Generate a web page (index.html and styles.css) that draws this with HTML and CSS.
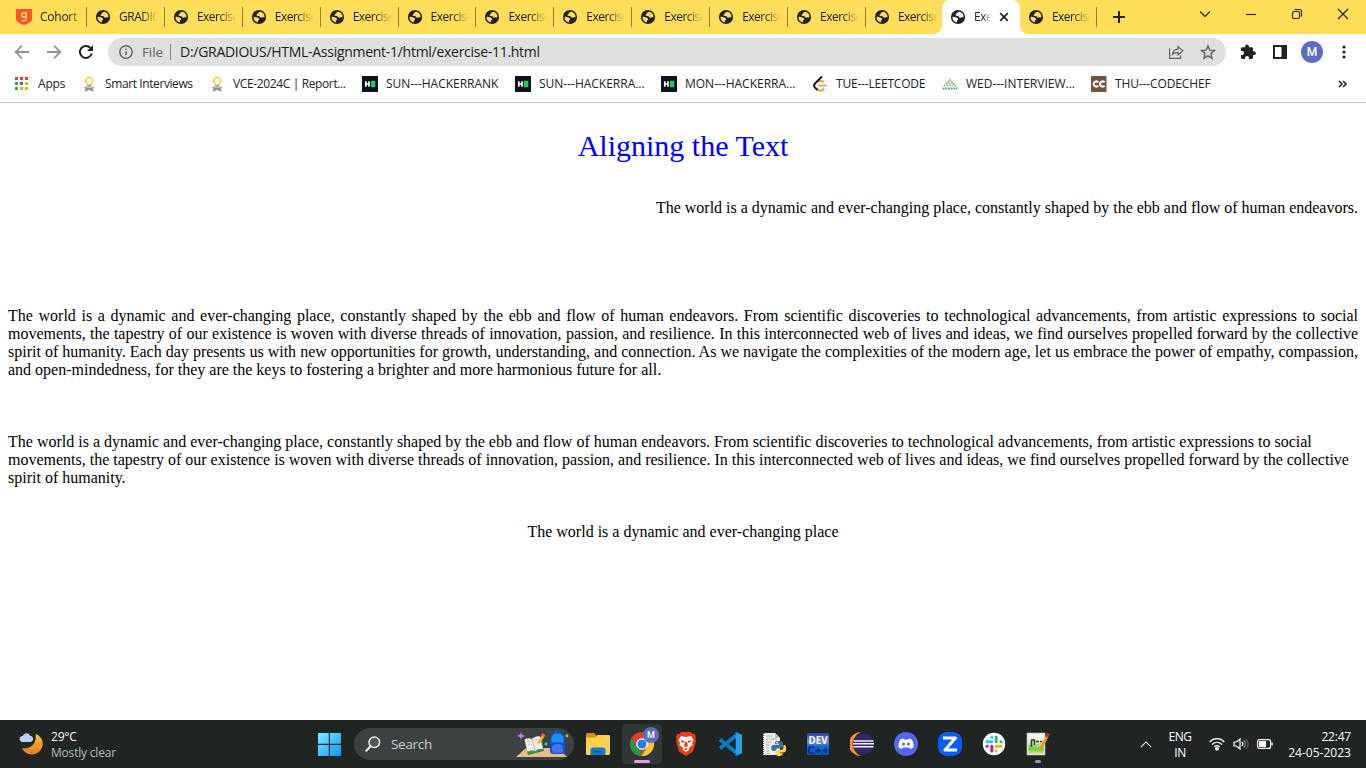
FILE: index.html
```html
<!DOCTYPE html>
<html lang="en">
<head>
<meta charset="utf-8">
<title>Aligning the Text</title>
<link rel="stylesheet" href="styles.css">
</head>
<body>
<svg class="defs" width="0" height="0">
  <symbol id="globe" viewBox="0 0 16 16">
    <path fill="#202124" fill-rule="evenodd" d="M8 .9a7.100 7.100 0 1 0 0 14.200A7.100 7.100 0 0 0 8 .9zM9.500 2.800C8 3 6.800 3.700 6.700 4.600c0 .7-1 .8-1.100 1.500-.1.700.6 1 1.300.9 1-.1 1.600-.1 2 .7.400.9 1.400 1.200 2.200.8.700-.4 1.500-.2 2.400-.1A5.500 5.500 0 0 0 9.500 2.800zM2.500 7.800c1.200.5 2.700.2 4 .7 1.200.5 1.900 1.300 1.600 2.100-.3.700-1.100.7-1.200 1.400v1.400A5.600 5.600 0 0 1 2.500 7.800z"/>
  </symbol>
  <symbol id="bulb" viewBox="0 0 16 16">
    <path fill="#fffbe0" stroke="#f0cf3c" stroke-width="1.500" d="M6.500 9C6 7.800 4.700 6.800 4.700 4.700a3.400 3.400 0 0 1 6.800 0C11.500 6.800 10.100 7.800 9.700 9z"/>
    <path fill="#8d8d8d" d="M6 9.300h4.200v1.500H6zM3.500 10.500l2.500 1h4.200l2.500-1v1.700L11 13l1.700 1v1.200h-2L8 13.500l-2.600 1.700H3.500V14l1.800-1-1.800-.8z"/>
  </symbol>
  <symbol id="hr" viewBox="0 0 16 16">
    <path fill="#0e141e" d="M0 0h16v16H0z"/><path stroke="#fff" stroke-width="1.700" d="M3.800 5.300v5.400M7 5.300v5.400M3.800 8H7"/><path fill="#1bd15f" d="M9 4.800h4.300v6.400H9z"/>
  </symbol>
</svg>

<header class="browser">
  <div class="tabstrip">
    <div class="tabs">
      <div class="tab"><svg class="ico" viewBox="0 0 16 16"><path fill="#fa5330" d="M0 0h16v10c0 3-4 4.600-8 6-4-1.400-8-3-8-6z"/><circle cx="8" cy="6" r="2.200" fill="none" stroke="#ffde59" stroke-width="1.500"/><path fill="none" stroke="#ffde59" stroke-width="1.400" d="M10.300 3v6.500c0 2.500-3.200 2.800-4.700 1.500"/></svg><span>Cohort</span></div>
      <div class="tab"><svg class="ico"><use href="#globe"/></svg><span>GRADIO</span></div>
      <div class="tab"><svg class="ico"><use href="#globe"/></svg><span>Exercise</span></div>
      <div class="tab"><svg class="ico"><use href="#globe"/></svg><span>Exercise</span></div>
      <div class="tab"><svg class="ico"><use href="#globe"/></svg><span>Exercise</span></div>
      <div class="tab"><svg class="ico"><use href="#globe"/></svg><span>Exercise</span></div>
      <div class="tab"><svg class="ico"><use href="#globe"/></svg><span>Exercise</span></div>
      <div class="tab"><svg class="ico"><use href="#globe"/></svg><span>Exercise</span></div>
      <div class="tab"><svg class="ico"><use href="#globe"/></svg><span>Exercise</span></div>
      <div class="tab"><svg class="ico"><use href="#globe"/></svg><span>Exercise</span></div>
      <div class="tab"><svg class="ico"><use href="#globe"/></svg><span>Exercise</span></div>
      <div class="tab last"><svg class="ico"><use href="#globe"/></svg><span>Exercise</span></div>
      <div class="tab active"><svg class="ico"><use href="#globe"/></svg><span>Exe</span><svg class="close" viewBox="0 0 10 10"><path stroke="#202124" stroke-width="1.700" d="M1.200 1.200l7.600 7.600M8.800 1.200L1.200 8.800"/></svg></div>
      <div class="tab after"><svg class="ico"><use href="#globe"/></svg><span>Exercise</span></div>
    </div>
    <svg class="plus" viewBox="0 0 12 12"><path stroke="#202124" stroke-width="2" d="M6 0v12M0 6h12"/></svg>
    <div class="winctl">
      <svg viewBox="0 0 12 12"><path d="M1 3.500l5 5 5-5"/></svg>
      <svg viewBox="0 0 12 12"><path d="M1 6.500h10"/></svg>
      <svg viewBox="0 0 12 12"><rect x="1.500" y="3.500" width="7" height="7" rx="1.500"/><path d="M3.500 1.500H8.500a2 2 0 0 1 2 2V8.500"/></svg>
      <svg viewBox="0 0 12 12"><path d="M1 1l10 10M11 1L1 11"/></svg>
    </div>
  </div>

  <div class="toolbar">
    <div class="nav">
      <svg viewBox="0 0 16 16"><path class="dim" d="M15 8H2M8 1.700L1.700 8 8 14.300"/></svg>
      <svg viewBox="0 0 16 16"><path class="dim" d="M1 8h13M8 1.700L14.300 8 8 14.300"/></svg>
      <svg viewBox="0 0 16 16"><path fill="none" stroke="#202124" stroke-width="2" d="M13.700 9.500A6 6 0 1 1 12.300 3.800"/><path fill="#202124" d="M15 1v6H9z"/></svg>
    </div>
    <div class="omnibox">
      <svg class="info" viewBox="0 0 14 14"><circle cx="7" cy="7" r="6.200" fill="none" stroke="#5f6368" stroke-width="1.400"/><path stroke="#5f6368" stroke-width="1.500" d="M7 6.200v4M7 3.600v1.500"/></svg>
      <span class="file">File</span><i></i><span class="url">D:/GRADIOUS/HTML-Assignment-1/html/exercise-11.html</span>
      <svg class="share" viewBox="0 0 16 16"><path fill="none" stroke="#5f6368" stroke-width="1.200" d="M1.600 4.500v9.900h11V11.500M4.500 10.300c.4-3 2.200-5 5.500-5.200V2.500l4.800 4.200-4.800 4.200V8.300c-2.600 0-4.200.6-5.500 2z"/></svg>
      <svg class="star" viewBox="0 0 16 16"><path fill="none" stroke="#5f6368" stroke-width="1.400" d="M8 1.900l1.800 4.300 4.600.4-3.500 3 1.100 4.600L8 11.800l-4 2.400 1.100-4.600-3.500-3 4.600-.4z"/></svg>
    </div>
    <div class="actions">
      <svg viewBox="0 0 16 16"><path fill="#202124" d="M14 7.300h-1V4.600c0-.8-.6-1.400-1.400-1.400H8.900V2.500a1.900 1.900 0 0 0-3.800 0v.7H2.400C1.600 3.200 1 3.800 1 4.600v2.500h1a2 2 0 0 1 0 4H1v2.500c0 .8.600 1.400 1.400 1.400H5v-1a2 2 0 0 1 4 0v1h2.600c.8 0 1.400-.6 1.400-1.400V11h1a1.850 1.850 0 0 0 0-3.700z"/></svg>
      <svg viewBox="0 0 16 16"><path fill="#202124" fill-rule="evenodd" d="M1 1h14v14H1zM3 3h6.500v10H3z"/></svg>
      <b class="avatar">M</b>
      <svg viewBox="0 0 16 16" fill="#202124"><circle cx="8" cy="3" r="1.600"/><circle cx="8" cy="8" r="1.600"/><circle cx="8" cy="13" r="1.600"/></svg>
    </div>
  </div>

  <nav class="bookmarks">
    <a><svg class="ico" viewBox="0 0 16 16"><path fill="#ea4335" d="M1 1h3v3H1zM6 1h3v3H6zM11 1h3v3h-3z"/><path fill="#34a853" d="M1 6h3v3H1zM1 11h3v3H1z"/><path fill="#1a73e8" d="M6 6h3v3H6z"/><path fill="#fbab05" d="M11 6h3v3h-3zM6 11h3v3H6zM11 11h3v3h-3z"/></svg><span class="w1">Apps</span></a>
    <a><svg class="ico"><use href="#bulb"/></svg><span class="w2">Smart Interviews</span></a>
    <a><svg class="ico"><use href="#bulb"/></svg><span class="w3">VCE-2024C | Report...</span></a>
    <a><svg class="ico"><use href="#hr"/></svg><span class="w4">SUN---HACKERRANK</span></a>
    <a><svg class="ico"><use href="#hr"/></svg><span class="w5">SUN---HACKERRA...</span></a>
    <a><svg class="ico"><use href="#hr"/></svg><span class="w6">MON---HACKERRA...</span></a>
    <a><svg class="ico" viewBox="0 0 16 16" fill="none" stroke-linecap="round" stroke-width="1.900"><path stroke="#b3b3b3" d="M7 9.500h7"/><path stroke="#ffa116" d="M7 5.500c1.700-1.300 3-.8 4.500.7M4.500 12.500c2.500 3.300 5 3 7.300.3"/><path stroke="#111" d="M9.500 1L3 7.500c-1.400 1.500-1.300 2.700 0 4.200l2 2"/></svg><span class="w7">TUE---LEETCODE</span></a>
    <a><svg class="ico" viewBox="0 0 16 16" fill="none" stroke-width="2" stroke-dasharray="2 .7"><path stroke="#45b1b6" d="M.5 12.500h15"/><path stroke="#6fa9ad" stroke-width="1.500" d="M2 10.300l6-6.500 6 6.500"/><path stroke="#e7b35a" d="M4.500 9.300h7"/><path stroke="#e7b35a" stroke-width="1.400" d="M6 7h4"/></svg><span class="w8">WED---INTERVIEW...</span></a>
    <a><svg class="ico" viewBox="0 0 16 16"><path fill="#70543f" d="M0 0h15.500v16H0z"/><path fill="none" stroke="#fff" stroke-width="2.100" d="M7.300 6.200C5.200 4.500 2.600 5.800 2.600 8S5.200 11.500 7.300 9.800M13.700 6.200C11.600 4.500 9 5.800 9 8s2.600 3.500 4.700 1.800"/></svg><span class="w9">THU---CODECHEF</span></a>
    <svg class="more" viewBox="0 0 10 8"><path fill="none" stroke="#202124" stroke-width="1.600" d="M1 1l3 3-3 3M5 1l3 3-3 3"/></svg>
  </nav>
</header>

<main class="page">
  <p class="title">Aligning the Text</p>
  <p class="right">The world is a dynamic and ever-changing place, constantly shaped by the ebb and flow of human endeavors.</p>
  <p class="justify">The world is a dynamic and ever-changing place, constantly shaped by the ebb and flow of human endeavors. From scientific discoveries to technological advancements, from artistic expressions to social movements, the tapestry of our existence is woven with diverse threads of innovation, passion, and resilience. In this interconnected web of lives and ideas, we find ourselves propelled forward by the collective spirit of humanity. Each day presents us with new opportunities for growth, understanding, and connection. As we navigate the complexities of the modern age, let us embrace the power of empathy, compassion, and open-mindedness, for they are the keys to fostering a brighter and more harmonious future for all.</p>
  <p class="left">The world is a dynamic and ever-changing place, constantly shaped by the ebb and flow of human endeavors. From scientific discoveries to technological advancements, from artistic expressions to social movements, the tapestry of our existence is woven with diverse threads of innovation, passion, and resilience. In this interconnected web of lives and ideas, we find ourselves propelled forward by the collective spirit of humanity.</p>
  <p class="center">The world is a dynamic and ever-changing place</p>
</main>

<footer class="taskbar">
  <div class="weather">
    <svg viewBox="0 0 26 26"><defs><linearGradient id="moon" x2="0" y2="1"><stop stop-color="#f7c332"/><stop offset="1" stop-color="#ef7a1a"/></linearGradient></defs><path fill="url(#moon)" d="M17.500 2C27 5 26.500 17 19.500 21c-6 3.200-13 1-15.500-5 6 1.700 15.500-3 13.500-14z"/><path fill="#bcd0f5" d="M4.500 10a3 3 0 0 1 .3-6C6 .4 11 .3 12 3.700c4 .3 4.200 6.300 0 6.300z"/></svg>
    <div><span class="temp">29°C</span><span class="sky">Mostly clear</span></div>
  </div>
  <svg class="start" viewBox="0 0 24 24"><defs><linearGradient id="win" x2="1" y2="1"><stop stop-color="#7ff0ff"/><stop offset="1" stop-color="#0a93f5"/></linearGradient></defs><path fill="url(#win)" d="M0 0h11.300v11.300H0zM12.500 0H24v11.300H12.500zM0 12.500h11.300V24H0zM12.500 12.500H24V24H12.500z"/></svg>
  <div class="search">
    <svg class="lens" viewBox="0 0 16 16"><circle cx="9.300" cy="6.300" r="5.300" fill="#555b5b" stroke="#eee" stroke-width="1.500"/><path stroke="#eee" stroke-width="2" stroke-linecap="round" d="M5.500 10.300L1.300 14.700"/></svg>
    <span>Search</span>
    <svg class="art" viewBox="0 0 54 28">
      <path fill="#e7bd8b" d="M1 27l10-9h32l9 9z"/>
      <path fill="#38914b" d="M10 13l17-3 2 11-16 4z"/><path fill="#eef1ea" d="M9.500 9.500c2.500-1.500 5-1.500 7.500-.5 2-2 5-3 8-2.500l3 12.500c-3-.5-5.500.3-7.500 2-2.500-1-5-.8-8 .8z"/><path stroke="#9aaa98" fill="none" stroke-width=".7" d="M17 9l3 11.500M12 11.500l3-.5M12.700 14.500l3-.5M19.500 10.500l3-1"/>
      <path stroke="#ffb629" stroke-width="3" d="M23 13.500l5-7.500"/><path stroke="#f5594c" stroke-width="3.500" d="M27.500 6.500l1.500-2.500"/>
      <path fill="#c879ff" d="M6 2l1 2.500L10 6 7 7 6 10 5 7 2 6l3-1.500z"/><circle cx="31" cy="14" r="1.500" fill="#35cbd9"/><circle cx="52" cy="6" r="1.400" fill="#eaa22c"/>
      <path fill="#0d55cf" d="M35 10c0-5 2.500-8 7.500-8S50 5 50 10v10c0 3-2 4-4 4h-7c-3 0-4-1-4-4z"/><path fill="#1f8df2" d="M36.500 10c0-4 2-6.500 6-6.500s6 2.500 6 6.500v2.500h-12z"/><path fill="#4674f0" d="M37 18c0-2.500 2-4 5.500-4s5.500 1.500 5.500 4v3c0 1.300-1 2-2 2h-7c-1 0-2-.7-2-2z"/><path fill="none" stroke="#1972dc" d="M40 3c0-3 5-3 5 0"/>
    </svg>
  </div>
  <div class="apps">
    <div><svg viewBox="0 0 24 24"><path fill="#d6940b" d="M0 2.500C0 1.500.5 1 1.500 1H8l2.500 2.500V7H0z"/><path fill="#ffd04b" d="M0 5.500h9L11.500 3H23l1 1v17.500c0 .7-.5 1.500-1.500 1.500h-21C.5 23 0 22.500 0 21.500z"/><path fill="#1578c9" d="M4.500 23v-5c0-1.500 1-2.500 2.500-2.500h10c1.500 0 2.500 1 2.500 2.500v5z"/><path fill="#0a529b" d="M8 19h8v1.300H8z"/></svg></div>
    <div class="current"><svg viewBox="0 0 24 24"><circle cx="12" cy="12" r="12" fill="#e33b2e"/><path fill="#229a48" d="M1.600 6L7 15.200 12 17l-.5 7A12 12 0 0 1 1.600 6z"/><path fill="#fcc934" d="M12 6.500h10.700A12 12 0 0 1 11.500 24l5.500-9z"/><circle cx="12" cy="12" r="5.800" fill="#fff"/><circle cx="12" cy="12" r="4.500" fill="#277af0"/></svg><b class="badge">M</b></div>
    <div><svg viewBox="0 0 24 24"><path fill="#f23c0e" d="M7.500 0h9l2 2 2.200-.2L22 5l-.7 2 .7 2-3 10.500L12 24l-7-4.500L2 9l.7-2L2 5l1.300-3.200 2.200.2z"/><path fill="#fff" d="M7 4l5 1 5-1 2.500 4-1.500 3 .5 2-4 3.500 1 1-3.500 2.500L8.500 17.500l1-1-4-3.500.5-2L4.500 8z"/><path fill="#f23c0e" d="M7 8l3.500 1.200L9.700 11 7.500 10zM17 8l-3.500 1.200.8 1.800 2.200-1zM11 10h2l1 4-2 1.200L10 14zM10 17l2-1 2 1-2 1.200z"/></svg></div>
    <div><svg viewBox="0 0 24 24"><path fill="none" stroke="#0879bd" stroke-width="3.800" stroke-linejoin="round" d="M18 3.500L2 16.500M2 7.500l16 13"/><path fill="#249fe5" d="M17.500 0L24 2.800v18.400L17.500 24z"/><path fill="#202625" d="M17.500 7v10L11.200 12z"/></svg></div>
    <div><svg viewBox="0 0 24 24"><path fill="#efefec" d="M1 1h12l5 5v17H1z"/><path fill="#bbb" d="M13 1v5h5z"/><path stroke="#a2a2a2" stroke-width=".8" d="M4 4h7M4 7h11M4 10h6M4 13h4M4 16h3M4 19h3M4 21.500h4"/><path stroke="#555" stroke-dasharray="1 1" d="M1.500 1v22"/><path fill="#3772a4" d="M15 9h3c2 0 3 1 3 3v2c0 2-1 2.500-3 2.500h-2c-2 0-2.500 1-2.500 2.500h-2C8.500 19 8.500 13 11 13h6v-.7h-4C13 10.300 13 9 15 9z"/><path fill="#ffd748" d="M21.500 13h.7c3 0 3 7.500-.7 7.500h-4.500v.8H21c0 2-1.500 2.700-4 2.700s-3.500-.8-3.500-2.700.8-3.300 3-3.300h2c1.800 0 3-1 3-3z"/><path fill="#fff" d="M14.500 10H16v1.400h-1.500z"/></svg></div>
    <div><svg viewBox="0 0 24 24"><defs><linearGradient id="dev" x2="0" y2="1"><stop stop-color="#293c98"/><stop offset=".4" stop-color="#7590d2"/><stop offset=".6" stop-color="#1b69d0"/><stop offset="1" stop-color="#0754bb"/></linearGradient></defs><path fill="url(#dev)" d="M1 1h22v22H1z"/><text class="dev" x="2.500" y="11.500" textLength="19" lengthAdjust="spacingAndGlyphs">DEV</text><text class="cpp" x="1" y="22" textLength="22" lengthAdjust="spacingAndGlyphs">C++</text></svg></div>
    <div><svg viewBox="0 0 24 24"><path fill="#f89524" d="M11 0a12 12 0 0 0 0 24C1 20 1 4 11 0z"/><circle cx="13.300" cy="12" r="10.700" fill="#332867"/><path fill="#f0eef8" d="M3.500 8.200h20v1.500h-20zM3 11h21v1.600H3zM3.500 14h20v1.500h-20z"/></svg></div>
    <div><svg viewBox="0 0 24 24"><circle cx="12" cy="12" r="12" fill="#5865f2"/><path fill="#fff" d="M9.300 6.500L9.800 7.500h4.400l.5-1 2.800.8c1.600 2.300 2.200 5 2 8-1 .9-2.100 1.400-3.400 1.700l-1-1.500H8.900L7.900 17c-1.300-.3-2.400-.8-3.400-1.700-.2-3 .4-5.700 2-8z"/><circle cx="9.500" cy="12" r="1.500" fill="#5865f2"/><circle cx="14.500" cy="12" r="1.500" fill="#5865f2"/></svg></div>
    <div><svg viewBox="0 0 24 24"><rect width="24" height="24" rx="9" fill="#0b5cff"/><path fill="none" stroke="#fff" stroke-width="3" stroke-linejoin="round" d="M5 6h12.500L7 18h12"/></svg></div>
    <div><svg viewBox="0 0 24 24" fill="none" stroke-width="3" stroke-linecap="round"><circle cx="12" cy="12" r="11.200" fill="#fff"/><path stroke="#36c5f0" d="M5 9.800H9.800M9.800 5v.3"/><path stroke="#2eb67d" d="M14.200 5V9.800M18.900 9.800h.2"/><path stroke="#ecb22e" d="M14.200 14.200H19M14.200 18.900v.2"/><path stroke="#e01e5a" d="M9.800 14.200V19M5 14.200h.2"/></svg></div>
    <div class="running"><svg viewBox="0 0 24 24"><defs><linearGradient id="npp" x2="0" y2="1"><stop offset=".3" stop-color="#f3f7e9"/><stop offset=".75" stop-color="#6ecb35"/><stop offset="1" stop-color="#d9f3ad"/></linearGradient></defs><path fill="url(#npp)" stroke="#ddd" stroke-width="1.500" d="M1.500 1.500h17v21h-17z"/><path fill="none" stroke="#333" stroke-width="1.500" d="M5.500 15V7.500M5 8h3.500v5M10 9.500h3M14 9.500h2"/><path stroke="#e29f24" stroke-width="2.800" d="M14 18l7-13.500"/><path stroke="#b44236" stroke-width="2.800" d="M20.800 5l1.500-3.500"/></svg></div>
  </div>
  <div class="tray">
    <svg class="chev" viewBox="0 0 14 8"><path d="M1 7l6-6 6 6"/></svg>
    <div class="lang"><span>ENG</span><span>IN</span></div>
    <svg class="wifi" viewBox="0 0 16 14"><path d="M.7 5C5 .6 11 .6 15.300 5M3 7.500c3-3 7-3 10 0M5.300 9.800c1.600-1.500 3.800-1.500 5.400 0"/><circle cx="8" cy="11.700" r="1.300" fill="#fff"/></svg>
    <svg class="vol" viewBox="0 0 16 14"><path d="M1 5h2.500L7 2v10L3.500 9H1zM9 5c1 1.200 1 2.800 0 4"/><path stroke="#929796" d="M10.800 3.500c2 2 2 5 0 7"/><path stroke="#59605f" d="M12.800 1.800c3 3 3 7.400 0 10.400"/></svg>
    <svg class="bat" viewBox="0 0 16 10"><rect x=".6" y=".6" width="13" height="8.800" rx="2"/><path fill="#fff" stroke="none" d="M2 2h7v6H2zM14.500 3.500h1.200v3h-1.200z"/></svg>
    <div class="clock"><span class="time">22:47</span><span class="date">24-05-2023</span></div>
  </div>
</footer>
</body>
</html>
```
FILE: styles.css
```css
* { box-sizing: border-box; }
body {
  margin: 0;
  width: 1366px;
  height: 768px;
  overflow: hidden;
  display: flex;
  flex-direction: column;
  background: #fff;
  color: #000;
  font-family: "Open Sans", "Noto Sans", sans-serif;
}
svg { display: block; flex: none; }
.defs { position: absolute; }
.ico { width: 16px; height: 16px; }

/* Tab strip */
.browser { flex: none; height: 103px; border-bottom: 1px solid #c9c9c9; color: #202124; }
.tabstrip { display: flex; height: 34px; background: #ffde59; padding-left: 8px; align-items: center; }
.tabs { display: flex; height: 34px; }
.tab {
  width: 77.9px;
  height: 34px;
  padding: 0 7px 0 8px;
  display: flex;
  align-items: center;
  gap: 8px;
  background: linear-gradient(#8f7f45, #8f7f45) right 7px / 1px 20px no-repeat;
}
.tab:first-child { width: 79px; }
.tab span {
  flex: 1;
  min-width: 0;
  white-space: nowrap;
  font-size: 12px;
  letter-spacing: -0.5px;
  line-height: 18px;
  -webkit-mask-image: linear-gradient(90deg, #000 58%, transparent 100%);
  mask-image: linear-gradient(90deg, #000 58%, transparent 100%);
}
.tab:first-child span {
  letter-spacing: -0.25px;
  -webkit-mask-image: linear-gradient(90deg, #000 70%, transparent 115%);
  mask-image: linear-gradient(90deg, #000 70%, transparent 115%);
}
.tab.last { width: 77px; background: none; padding-right: 5px; }
.tab.active { position: relative; width: 78px; background: #fff; border-radius: 8px 8px 0 0; padding-right: 11px; margin-left: -1px; }
.tab.active span { letter-spacing: -0.4px; }
.tab.after { width: 77px; }
.tab.active::before, .tab.active::after {
  content: "";
  position: absolute;
  bottom: 0;
  width: 8px;
  height: 8px;
}
.tab.active::before { left: -8px; background: radial-gradient(circle at 0 0, transparent 7.5px, #fff 8px); }
.tab.active::after { right: -8px; background: radial-gradient(circle at 100% 0, transparent 7.5px, #fff 8px); }
.close { width: 10px; height: 10px; }
.plus { width: 12px; height: 12px; margin-left: 16px; }
.winctl { display: flex; gap: 34px; margin-left: auto; padding: 0 17px 6px 0; }
.winctl svg { width: 12px; height: 12px; fill: none; stroke: #1d1d1d; stroke-width: 1.1; }

/* Toolbar */
.toolbar { display: flex; height: 36px; align-items: center; padding-left: 14px; }
.nav { display: flex; gap: 16px; width: 94px; }
.nav svg { width: 16px; height: 16px; }
.dim { fill: none; stroke: #949494; stroke-width: 1.8; }
.omnibox {
  width: 1118px;
  height: 28px;
  border-radius: 14px;
  background: #e0e0e0;
  display: flex;
  align-items: center;
  padding: 0 10px 0 11px;
  font-size: 14px;
  line-height: 20px;
  white-space: nowrap;
}
.info { width: 14px; height: 14px; margin-right: 9px; }
.file { width: 28px; color: #5f6368; font-size: 13.5px; letter-spacing: -0.1px; }
.omnibox i { width: 1px; height: 16px; background: #85888b; }
.url { margin-left: 9px; letter-spacing: -0.28px; }
.share { width: 16px; height: 16px; margin-left: auto; }
.star { width: 16px; height: 16px; margin-left: 16px; }
.actions { display: flex; align-items: center; margin-left: 14px; }
.actions svg { width: 16px; height: 16px; }
.actions svg + svg { margin-left: 16px; }
.avatar {
  width: 22px;
  height: 22px;
  margin: 0 13px;
  border-radius: 50%;
  background: #5c6bc0;
  color: #fff;
  font: 500 12px/22px Roboto, sans-serif;
  text-align: center;
}

/* Bookmarks */
.bookmarks { display: flex; align-items: center; height: 28px; gap: 16px; padding-left: 14px; }
.bookmarks a { display: flex; align-items: center; gap: 8px; }
.bookmarks span { white-space: nowrap; font-size: 12px; line-height: 18px; }
.w1 { width: 27px; letter-spacing: -0.2px; }
.w2 { width: 88px; letter-spacing: -0.4px; }
.w3 { width: 113px; letter-spacing: -0.37px; }
.w4 { width: 113px; letter-spacing: -0.03px; }
.w5 { width: 106px; letter-spacing: -0.01px; }
.w6 { width: 111px; letter-spacing: -0.01px; }
.w7 { width: 90px; letter-spacing: -0.2px; }
.w8 { width: 109px; letter-spacing: 0.01px; }
.w9 { width: 96px; letter-spacing: -0.13px; }
.more { width: 10px; height: 8px; margin: 0 18px 0 auto; }

/* Document */
.page { flex: 1; padding: 26px 8px 0; font: 16px "Liberation Serif", "Times New Roman", serif; }
.page p { margin: 0; }
.page .title { color: #00f; font-size: 30px; height: 34px; text-align: center; margin-bottom: 36px; }
.page .right { text-align: right; margin-bottom: 90px; }
.page .justify { text-align: justify; margin-bottom: 54px; }
.page .left { margin-bottom: 36px; }
.page .center { text-align: center; }

/* Taskbar */
.taskbar { flex: none; display: flex; align-items: center; height: 48px; background: #202524; color: #fff; }
.taskbar span { display: block; white-space: nowrap; }
.weather { display: flex; align-items: center; width: 318px; padding: 1px 0 0 18px; gap: 7px; font-size: 12px; line-height: 16px; }
.weather svg { width: 26px; height: 26px; }
.temp { letter-spacing: -0.2px; }
.sky { color: #b9bbbb; letter-spacing: -0.2px; }
.start { width: 23px; height: 23px; }
.search {
  width: 220px;
  height: 32px;
  margin-left: 13px;
  padding: 0 5px 0 11px;
  border-radius: 16px;
  background: #3b4241;
  display: flex;
  align-items: center;
}
.lens { width: 16px; height: 16px; }
.search span { margin-left: 10px; font-size: 13.5px; color: #ccc; letter-spacing: -0.3px; }
.art { width: 54px; height: 28px; margin-left: auto; }
.apps { display: flex; margin-left: 2px; }
.apps div { position: relative; width: 44px; height: 40px; display: flex; align-items: center; justify-content: center; }
.apps svg { width: 24px; height: 24px; }
.apps .current { width: 40px; margin: 0 2px; border-radius: 4px; background: #303635; }
.apps .current::after, .apps .running::after {
  content: "";
  position: absolute;
  bottom: 1px;
  left: 12px;
  width: 16px;
  height: 3px;
  border-radius: 2px;
  background: #dd9ee6;
}
.apps .running::after { left: 19px; width: 6px; background: #999; }
.badge {
  position: absolute;
  left: 21px;
  top: 3px;
  width: 16px;
  height: 16px;
  border-radius: 50%;
  background: #5c6bc0;
  font: 500 9px/16px Roboto, sans-serif;
  text-align: center;
}
.dev { fill: #fff; font: bold 10px/10px "Open Sans", sans-serif; }
.cpp { fill: #092b78; font: bold 10px/10px "Open Sans", sans-serif; }
.tray { display: flex; align-items: center; margin-left: auto; padding-right: 15px; font-size: 12px; line-height: 16px; }
.tray svg { fill: none; stroke: #fff; stroke-width: 1.2; }
.chev { width: 12px; height: 7px; }
.lang { width: 28px; margin: 2px 15px 0 14px; text-align: center; letter-spacing: -0.4px; }
.wifi { width: 16px; height: 14px; }
.vol { width: 16px; height: 14px; margin: 0 8px; }
.bat { width: 16px; height: 10px; }
.clock { width: 64px; margin: 1px 0 0 14px; display: flex; flex-direction: column; align-items: flex-end; }
.time { letter-spacing: -0.2px; }
.date { letter-spacing: 0.02px; }
```
